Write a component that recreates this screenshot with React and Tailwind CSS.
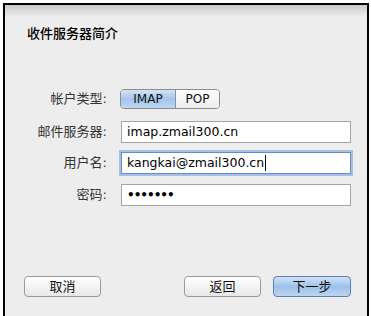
export default function App() {
  const font = { fontFamily: '"DejaVu Sans", "Noto Sans CJK SC", sans-serif' };
  return (
    <div className="w-[371px] h-[316px] bg-white pt-[3px] pl-[3px] overflow-hidden" style={font}>
      <div className="w-[366px] h-[320px] border-l-2 border-t-2 border-r-2 border-black bg-[#ededed] flex flex-col">
        <div className="h-[12px] bg-gradient-to-b from-[#c9c9c9] to-[#ededed]" />

        <div className="pt-[9px] pl-[22px] text-[13px] leading-[16px] text-black font-medium">
          收件服务器简介
        </div>

        <div className="mt-[47px] flex flex-col text-[13px] text-[#333]">
          <div className="flex items-center h-[20px]">
            <div className="w-[102px] text-right">帐户类型:</div>
            <div className="ml-[13px] flex h-[20px] rounded-[4px] border border-[#8c8c8c] overflow-hidden text-[12px] leading-none">
              <div className="w-[55px] flex items-center justify-center bg-gradient-to-b from-[#d3e3f6] via-[#a6c5ea] to-[#bcd5f2] border-r border-[#7f95b4] text-[#111]">
                IMAP
              </div>
              <div className="w-[43px] flex items-center justify-center bg-gradient-to-b from-white to-[#ececec] text-[#111]">
                POP
              </div>
            </div>
          </div>

          <div className="flex items-center h-[22px] mt-[12px]">
            <div className="w-[102px] text-right">邮件服务器:</div>
            <div className="ml-[14px] w-[230px] h-[22px] border border-[#a5a5a5] bg-white flex items-center pl-[5px] text-[12.5px] text-black">
              imap.zmail300.cn
            </div>
          </div>

          <div className="flex items-center h-[22px] mt-[9px]">
            <div className="w-[102px] text-right">用户名:</div>
            <div className="ml-[14px] w-[230px] h-[22px] border border-[#6d8cbc] shadow-[0_0_0_2px_#a4c0e4] bg-white flex items-center pl-[5px] text-[12.5px] text-black">
              kangkai@zmail300.cn
              <span className="inline-block w-px h-[16px] bg-black ml-px" />
            </div>
          </div>

          <div className="flex items-center h-[22px] mt-[10px]">
            <div className="w-[102px] text-right">密码:</div>
            <div className="ml-[14px] w-[230px] h-[22px] border border-[#a5a5a5] bg-white flex items-center pl-[5px] text-[12px] font-bold tracking-[-1px] text-black">
              •••••••
            </div>
          </div>
        </div>

        <div className="mt-[70px] flex justify-between pl-[19px] pr-[16px] text-[13px] text-[#111]">
          <button className="w-[77px] h-[21px] rounded-[4px] border border-[#9a9a9a] bg-gradient-to-b from-white to-[#e8e8e8] flex items-center justify-center">
            取消
          </button>
          <div className="flex gap-[12px]">
            <button className="w-[77px] h-[21px] rounded-[4px] border border-[#9a9a9a] bg-gradient-to-b from-white to-[#e8e8e8] flex items-center justify-center">
              返回
            </button>
            <button className="w-[78px] h-[21px] rounded-[4px] border border-[#5d80b6] bg-gradient-to-b from-[#d3e3f6] via-[#9ec1ea] to-[#bcd5f2] flex items-center justify-center">
              下一步
            </button>
          </div>
        </div>
      </div>
    </div>
  );
}
